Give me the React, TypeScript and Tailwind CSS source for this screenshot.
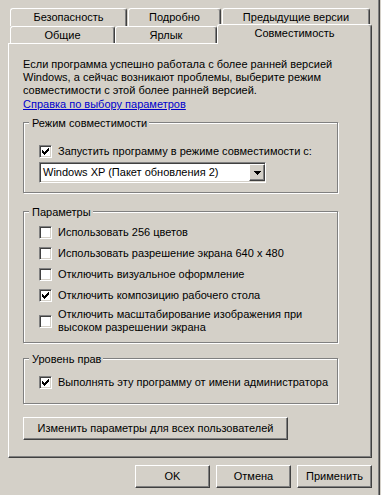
import type { ReactNode } from "react";

const raised =
  "border border-t-white border-l-white border-r-[#404040] border-b-[#404040] shadow-[inset_-1px_-1px_0_#808080]";
const sunken =
  "border border-t-[#808080] border-l-[#808080] border-r-white border-b-white shadow-[inset_1px_1px_0_#404040,inset_-1px_-1px_0_#d4d0c8]";
const etched = "border border-[#808080] shadow-[inset_1px_1px_0_#fff,1px_1px_0_#fff]";

function Tab({ label, className }: { label: string; className: string }) {
  return (
    <div
      className={`flex h-full items-center justify-center rounded-t-[3px] border-l border-r border-t border-l-white border-r-[#404040] border-t-white shadow-[inset_-1px_0_0_#808080] ${className}`}
    >
      {label}
    </div>
  );
}

function CheckMark() {
  const cols = [2, 3, 4, 3, 2, 1, 0];
  return (
    <svg width="7" height="7" viewBox="0 0 7 7" shapeRendering="crispEdges">
      {cols.map((y, x) => (
        <rect key={x} x={x} y={y} width="1" height="3" fill="#000" />
      ))}
    </svg>
  );
}

function Checkbox({ checked, children }: { checked?: boolean; children: ReactNode }) {
  return (
    <div className="flex items-center gap-[6px]">
      <div className={`flex h-[13px] w-[13px] shrink-0 items-center justify-center bg-white ${sunken}`}>
        {checked ? <CheckMark /> : null}
      </div>
      <div className="whitespace-nowrap">{children}</div>
    </div>
  );
}

function GroupBox({ title, className, children }: { title: string; className: string; children: ReactNode }) {
  return (
    <div className={`relative w-[315px] ${etched} ${className}`}>
      <span className="absolute -top-[6px] left-[5px] bg-[#d4d0c8] pl-[3px] pr-[2px]">{title}</span>
      {children}
    </div>
  );
}

function Button({ label, className }: { label: string; className: string }) {
  return (
    <div className={`flex h-[23px] items-center justify-center bg-[#d4d0c8] ${raised} ${className}`}>
      {label}
    </div>
  );
}

export default function App() {
  return (
    <div className="h-[495px] w-[381px] overflow-hidden bg-[#d4d0c8] font-['Liberation_Sans',Arial,sans-serif] text-[11px] leading-[13px] text-black">
      <div className="h-full w-[380px] border-r border-r-[#404040] pl-[8px] pt-[8px] shadow-[inset_-1px_0_0_#808080]">
        {/* back row of tabs */}
        <div className="ml-[2px] flex h-[18px] gap-[1px]">
          <Tab label="Безопасность" className="w-[117px]" />
          <Tab label="Подробно" className="w-[93px]" />
          <Tab label="Предыдущие версии" className="w-[148px]" />
        </div>
        {/* front row */}
        <div className="ml-[2px] flex h-[17px]">
          <Tab label="Общие" className="w-[105px]" />
          <Tab label="Ярлык" className="w-[102px]" />
          <div className="relative z-10 -mt-[2px] flex h-[20px] w-[155px] items-center justify-center rounded-t-[3px] border-l border-r border-t border-l-white border-r-[#404040] border-t-white bg-[#d4d0c8] pb-[2px] shadow-[inset_-1px_0_0_#808080]">
            Совместимость
          </div>
        </div>

        <div className={`h-[415px] w-[364px] pl-[14px] pt-[14px] ${raised}`}>
          <p className="whitespace-nowrap">
            Если программа успешно работала с более ранней версией
            <br />
            Windows, а сейчас возникают проблемы, выберите режим
            <br />
            совместимости с этой более ранней версией.
          </p>
          <div className="mt-[1px]">
            <span className="text-[#0000cc] underline">Справка по выбору параметров</span>
          </div>

          <GroupBox title="Режим совместимости" className="mt-[11px] h-[71px] pl-[15px] pt-[22px]">
            <Checkbox checked>Запустить программу в режиме совместимости с:</Checkbox>
            <div className={`mt-[4px] flex h-[21px] w-[227px] items-center bg-white ${sunken}`}>
              <span className="flex-1 whitespace-nowrap pl-[3px]">Windows XP (Пакет обновления 2)</span>
              <div className={`flex h-[17px] w-[16px] items-center justify-center bg-[#d4d0c8] ${raised}`}>
                <svg width="7" height="4" viewBox="0 0 7 4" shapeRendering="crispEdges">
                  <path d="M0 0h7v1H0zM1 1h5v1H1zM2 2h3v1H2zM3 3h1v1H3z" fill="#000" />
                </svg>
              </div>
            </div>
          </GroupBox>

          <GroupBox title="Параметры" className="mt-[18px] h-[132px] pl-[15px] pt-[14px]">
            <div className="flex flex-col gap-[8px]">
              <Checkbox>Использовать 256 цветов</Checkbox>
              <Checkbox>Использовать разрешение экрана 640 x 480</Checkbox>
              <Checkbox>Отключить визуальное оформление</Checkbox>
              <Checkbox checked>Отключить композицию рабочего стола</Checkbox>
              <div className="-mt-[2px]">
                <Checkbox>
                  Отключить масштабирование изображения при
                  <br />
                  высоком разрешении экрана
                </Checkbox>
              </div>
            </div>
          </GroupBox>

          <GroupBox title="Уровень прав" className="mt-[15px] h-[46px] pl-[15px] pt-[17px]">
            <Checkbox checked>Выполнять эту программу от имени администратора</Checkbox>
          </GroupBox>

          <Button label="Изменить параметры для всех пользователей" className="mt-[13px] w-[265px]" />
        </div>

        <div className="mt-[7px] flex w-[364px] justify-end gap-[6px]">
          <Button label="OK" className="w-[75px]" />
          <Button label="Отмена" className="w-[75px]" />
          <Button label="Применить" className="w-[75px]" />
        </div>
      </div>
    </div>
  );
}
